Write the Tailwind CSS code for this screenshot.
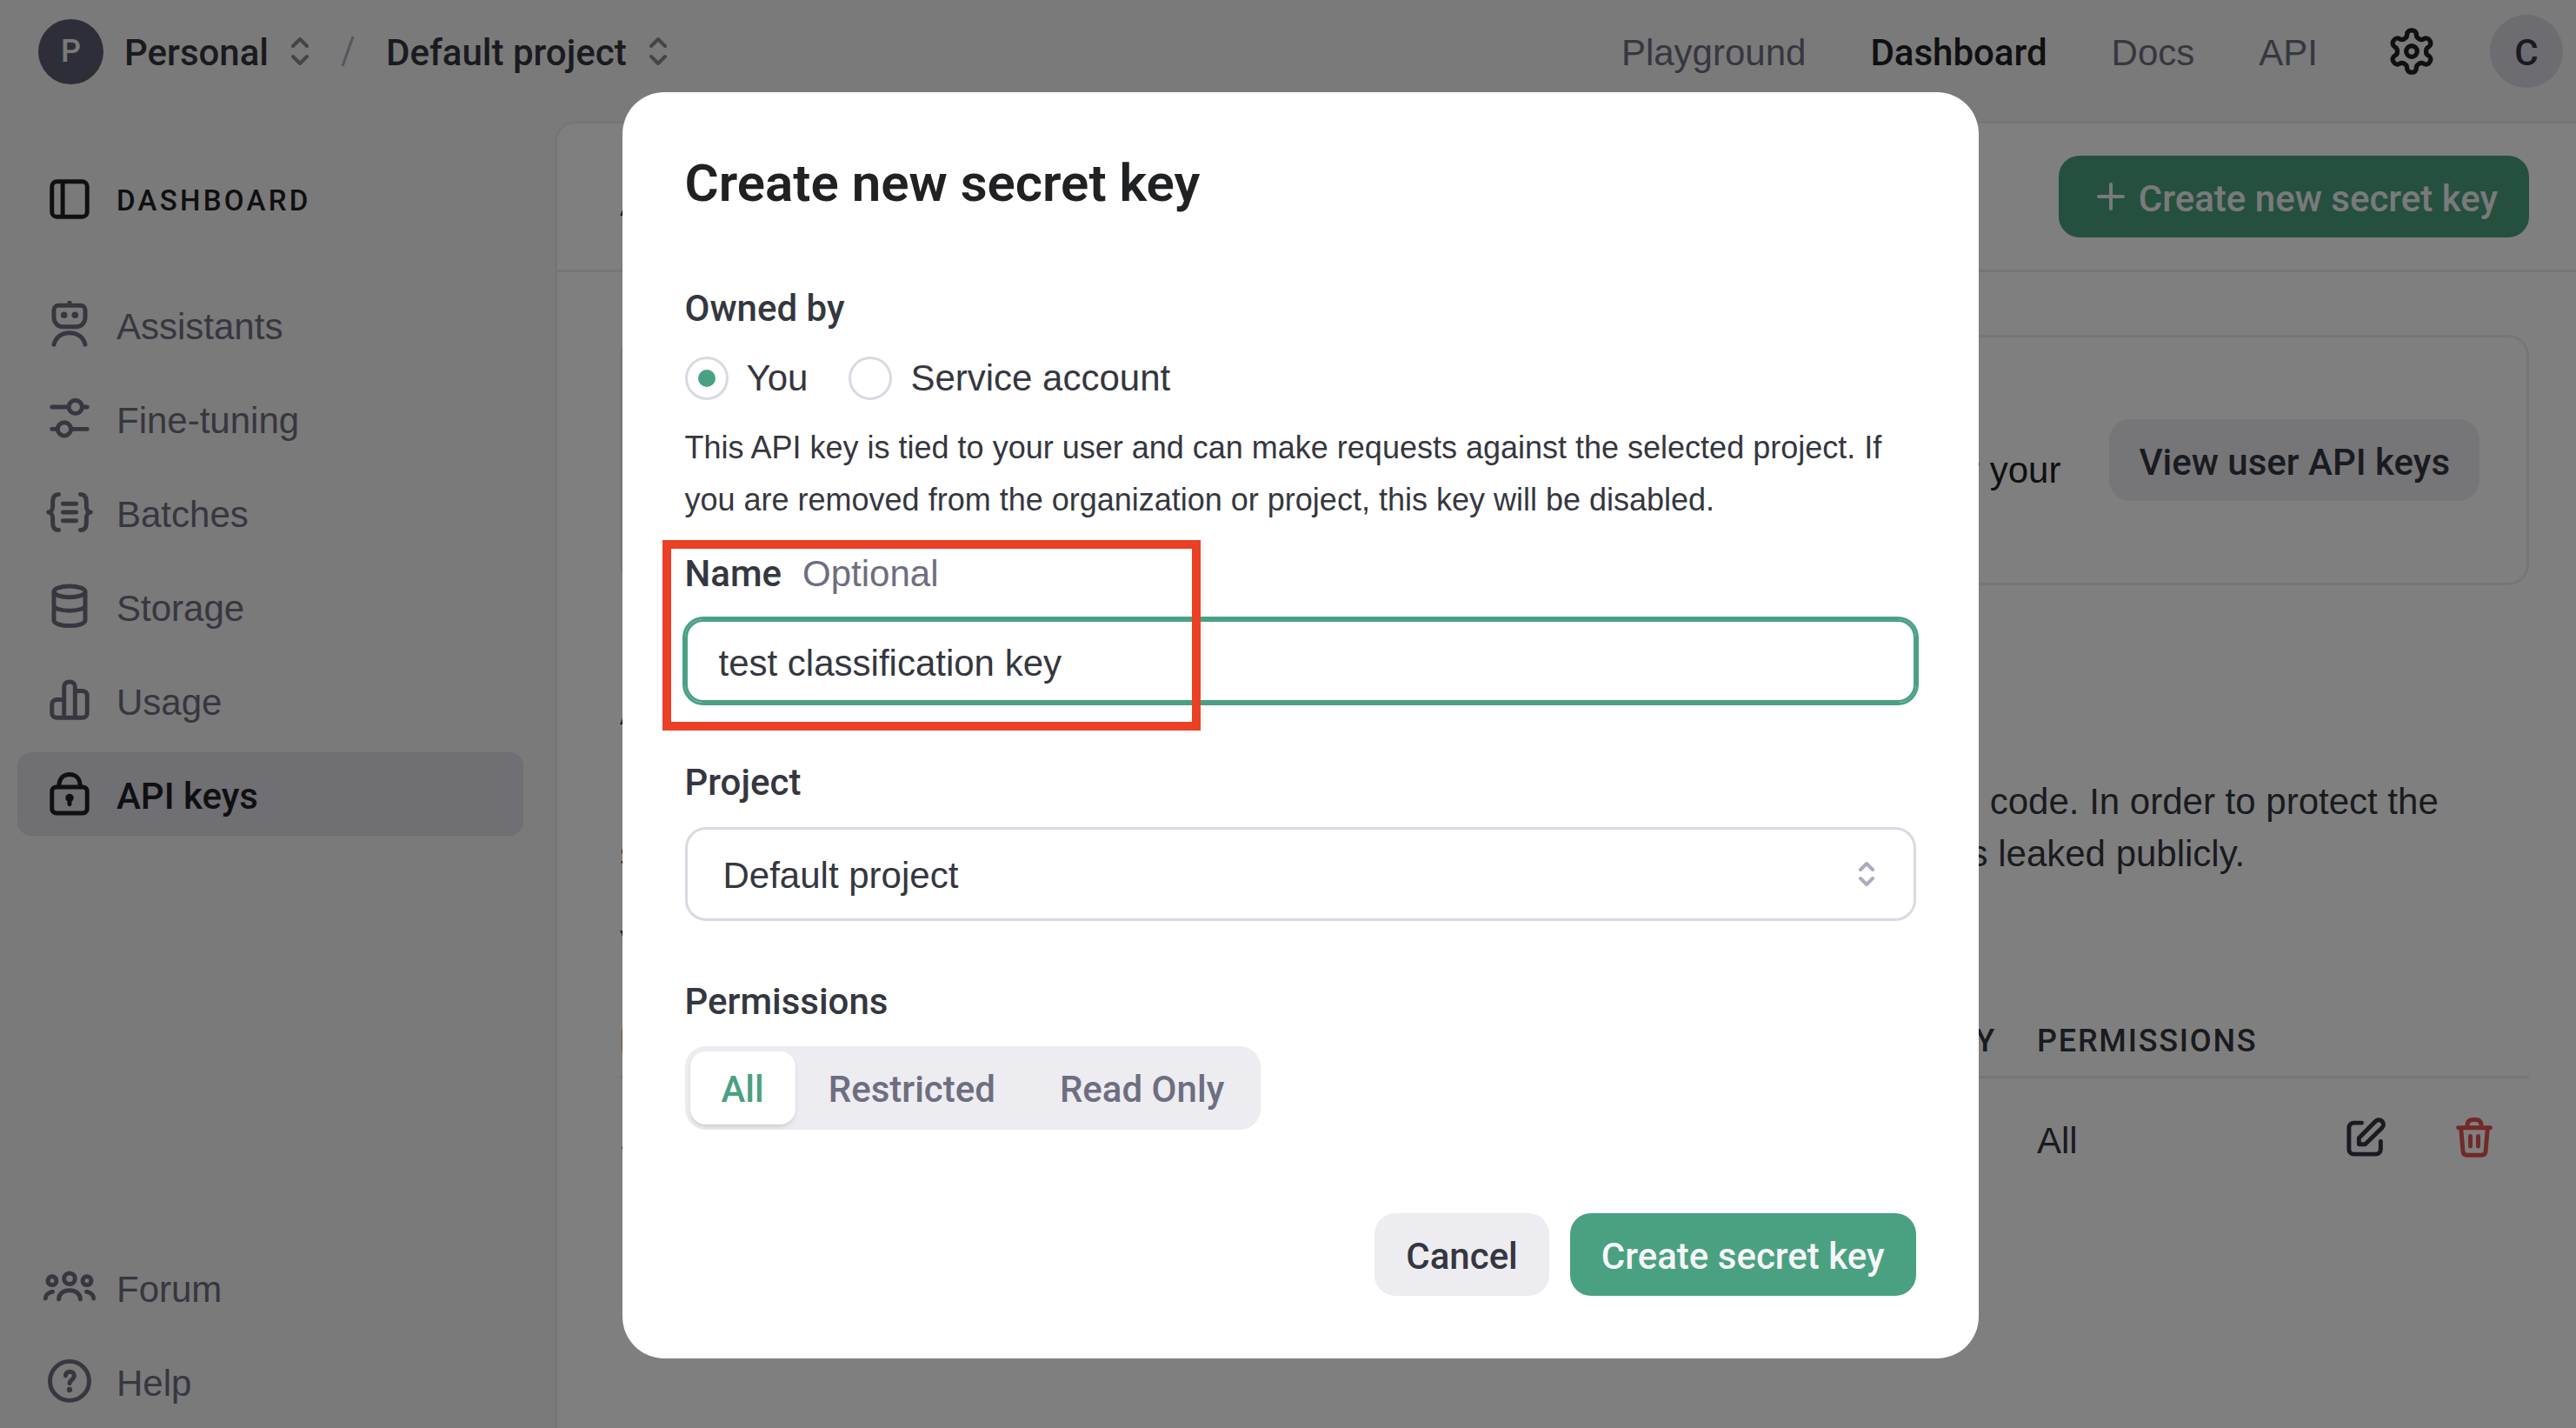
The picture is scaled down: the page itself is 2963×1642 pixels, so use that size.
<!DOCTYPE html>
<html lang="en">
<head>
<meta charset="utf-8">
<meta name="viewport" content="width=device-width, initial-scale=1">
<title>API keys</title>
<script src="https://cdn.jsdelivr.net/npm/@tailwindcss/browser@4"></script>
</head>
<body class="[font-family:'Liberation_Sans',Arial,sans-serif] text-[42px] leading-[60px] text-[#353740]">

<div class="flex h-screen flex-col overflow-hidden bg-[#f4f4f4]">
  <!-- Top bar -->
  <header class="flex h-[118px] shrink-0 items-center justify-between pr-[15px] pl-11">
    <div class="flex items-center [font-family:Roboto,'Liberation_Sans',sans-serif] font-medium">
      <span class="grid size-[75px] place-items-center rounded-full bg-[#5d5d70] text-[36px] text-[#f4f4f4]">P</span>
      <button type="button" class="ml-6 flex items-center gap-6 font-medium"><span class="pt-1">Personal</span>
        <svg class="h-8 w-6 text-[#8a8a8a]" viewBox="0 0 24 32" fill="none" stroke="currentColor" stroke-width="4" stroke-linecap="round" stroke-linejoin="round"><path d="M4 10l8-8 8 8M4 22l8 8 8-8"/></svg>
      </button>
      <svg class="ml-[33px] h-9 w-5 text-[#acacbe]" viewBox="0 0 20 36" fill="none" stroke="currentColor" stroke-width="3"><path d="M16 1L4 35"/></svg>
      <button type="button" class="ml-[34px] flex items-center gap-6 font-medium"><span class="pt-1">Default project</span>
        <svg class="h-8 w-6 text-[#8a8a8a]" viewBox="0 0 24 32" fill="none" stroke="currentColor" stroke-width="4" stroke-linecap="round" stroke-linejoin="round"><path d="M4 10l8-8 8 8M4 22l8 8 8-8"/></svg>
      </button>
    </div>
    <nav class="flex items-center text-[#6e6e80]">
      <div class="flex gap-[74px] pt-1">
        <a href="#playground">Playground</a>
        <a href="#dashboard" class="[font-family:Roboto,'Liberation_Sans',sans-serif] font-medium text-[#202123]">Dashboard</a>
        <a href="#docs">Docs</a>
        <a href="#api">API</a>
      </div>
      <button type="button" aria-label="Settings" class="ml-[79px] text-[#202123]">
        <svg class="size-[58px]" viewBox="0 0 24 24" fill="none" stroke="currentColor" stroke-width="2.200" stroke-linecap="round" stroke-linejoin="round"><path d="M12.220 2h-.440a2 2 0 0 0-2 2v.180a2 2 0 0 1-1 1.730l-.430.250a2 2 0 0 1-2 0l-.150-.080a2 2 0 0 0-2.730.730l-.220.380a2 2 0 0 0 .730 2.730l.150.100a2 2 0 0 1 1 1.720v.510a2 2 0 0 1-1 1.740l-.150.090a2 2 0 0 0-.730 2.730l.220.380a2 2 0 0 0 2.730.730l.150-.080a2 2 0 0 1 2 0l.430.250a2 2 0 0 1 1 1.730V20a2 2 0 0 0 2 2h.440a2 2 0 0 0 2-2v-.180a2 2 0 0 1 1-1.730l.430-.250a2 2 0 0 1 2 0l.150.080a2 2 0 0 0 2.730-.730l.220-.390a2 2 0 0 0-.730-2.730l-.150-.080a2 2 0 0 1-1-1.740v-.500a2 2 0 0 1 1-1.740l.150-.090a2 2 0 0 0 .730-2.730l-.220-.380a2 2 0 0 0-2.730-.730l-.150.080a2 2 0 0 1-2 0l-.430-.250a2 2 0 0 1-1-1.730V4a2 2 0 0 0-2-2z"/><circle cx="12" cy="12" r="2.600"/></svg>
      </button>
      <span class="ml-[61px] grid size-[84px] place-items-center rounded-full bg-[#d9d9e3] pt-1 [font-family:Roboto,'Liberation_Sans',sans-serif] font-medium text-[#353740]">C</span>
    </nav>
  </header>

  <div class="flex min-h-0 flex-1">
    <!-- Sidebar -->
    <aside class="flex w-[638px] shrink-0 flex-col pt-[84px] pr-9 pb-[5px] pl-5 text-[#6e6e80]">
      <div class="flex h-[54px] items-center gap-[27px] pl-[33px] text-[#202123]">
        <svg class="size-[54px]" viewBox="0 0 24 24" fill="none" stroke="currentColor" stroke-width="2.200"><rect x="3" y="3" width="18" height="18" rx="2.500"/><path d="M8.500 3v18"/></svg>
        <span class="pt-1 [font-family:Roboto,'Liberation_Sans',sans-serif] text-[33px] font-medium tracking-widest">DASHBOARD</span>
      </div>
      <nav class="mt-[69px] flex flex-col gap-3">
        <a href="#assistants" class="flex h-24 items-center gap-[27px] rounded-2xl pl-[33px]">
          <svg class="size-[54px]" viewBox="0 0 24 24" fill="none" stroke="currentColor" stroke-width="2.200" stroke-linecap="round" stroke-linejoin="round"><path d="M12 .8v1.400M6.300 2.300h11.400A2.300 2.300 0 0 1 20 4.600V8.600a4.600 4.600 0 0 1-4.600 4.600H8.600A4.600 4.600 0 0 1 4 8.600V4.600a2.300 2.300 0 0 1 2.300-2.300zM4 22.300c.9-3.700 4-6 8-6s7.100 2.300 8 6"/><circle cx="9.200" cy="7.200" r="1.700" fill="currentColor" stroke="none"/><circle cx="14.800" cy="7.200" r="1.700" fill="currentColor" stroke="none"/></svg>
          <span class="pt-1.5">Assistants</span></a>
        <a href="#fine-tuning" class="flex h-24 items-center gap-[27px] rounded-2xl pl-[33px]">
          <svg class="size-[54px]" viewBox="0 0 24 24" fill="none" stroke="currentColor" stroke-width="2.200" stroke-linecap="round"><path d="M3 6.200h8.500M18.500 6.200H21M3 17.500h2.800M12.800 17.500H21"/><circle cx="15" cy="6.200" r="3.400"/><circle cx="9.300" cy="17.500" r="3.400"/></svg>
          <span class="pt-1.5">Fine-tuning</span></a>
        <a href="#batches" class="flex h-24 items-center gap-[27px] rounded-2xl pl-[33px]">
          <svg class="size-[54px]" viewBox="0 0 24 24" fill="none" stroke="currentColor" stroke-width="2.200" stroke-linecap="round" stroke-linejoin="round"><path d="M6.500 2.900C4.200 2.900 3.400 4.300 3.400 6.500v2.300C3.400 10.600 2.600 12 1.200 12c1.400 0 2.200 1.400 2.200 3.200v2.300c0 2.200.8 3.600 3.100 3.600M17.500 2.900c2.300 0 3.100 1.400 3.100 3.600v2.300c0 1.800.8 3.200 2.200 3.200-1.400 0-2.200 1.400-2.200 3.200v2.300c0 2.200-.8 3.600-3.100 3.600M8.600 7.700h6.800M8.600 12h6.800M8.600 16.300h6.800"/></svg>
          <span class="pt-1.5">Batches</span></a>
        <a href="#storage" class="flex h-24 items-center gap-[27px] rounded-2xl pl-[33px]">
          <svg class="size-[54px]" viewBox="0 0 24 24" fill="none" stroke="currentColor" stroke-width="2.200"><ellipse cx="12" cy="4.600" rx="8" ry="2.800"/><path d="M4 4.600v14.600C4 20.900 7.600 22 12 22s8-1.100 8-2.800V4.600M4 11.600c0 1.600 3.600 2.700 8 2.700s8-1.100 8-2.700"/></svg>
          <span class="pt-1.5">Storage</span></a>
        <a href="#usage" class="flex h-24 items-center gap-[27px] rounded-2xl pl-[33px]">
          <svg class="size-[54px]" viewBox="0 0 24 24" fill="none" stroke="currentColor" stroke-width="2.200" stroke-linejoin="round"><path d="M9.200 21V5.200c0-1.500 1-2.500 2.800-2.500s2.800 1 2.800 2.500V21M9.200 11.800H5.500C4 11.800 3 12.800 3 14.200V18.500C3 20 4 21 5.500 21h13c1.500 0 2.500-1 2.500-2.500V9.700c0-1.500-1-2.400-2.500-2.400h-3.700"/></svg>
          <span class="pt-1.5">Usage</span></a>
        <a href="#api-keys" aria-current="page" class="flex h-24 items-center gap-[27px] rounded-2xl bg-[#dedee8] pl-[33px] [font-family:Roboto,'Liberation_Sans',sans-serif] font-medium text-[#202123]">
          <svg class="size-[54px]" viewBox="0 0 24 24" fill="none" stroke="currentColor" stroke-width="2.200" stroke-linecap="round"><rect x="3" y="8.400" width="18" height="13.400" rx="2.200"/><path d="M6.600 8c0-3.600 2-6 5.400-6s5.400 2.400 5.400 6"/><circle cx="12" cy="14" r="2.100" fill="currentColor" stroke="none"/><path d="M12 14.500v2.700"/></svg>
          <span class="pt-1.5">API keys</span></a>
      </nav>
      <nav class="mt-auto flex flex-col gap-3">
        <a href="#forum" class="flex h-24 items-center gap-[27px] rounded-2xl pl-[33px]">
          <svg class="size-[54px] overflow-visible" viewBox="0 0 24 24" fill="none" stroke="currentColor" stroke-width="2.200" stroke-linecap="round"><circle cx="12" cy="7.200" r="2.800"/><circle cx="3.100" cy="8.300" r="2.200"/><circle cx="20.900" cy="8.300" r="2.200"/><path d="M6.500 17.800C6.500 15 8.800 13.200 12 13.200s5.500 1.800 5.500 4.600M3.300 13.900C1.300 14.200-.2 15.600-.3 17.300M20.700 13.900c2 .3 3.500 1.700 3.600 3.400"/></svg>
          <span class="pt-1">Forum</span></a>
        <a href="#help" class="flex h-24 items-center gap-[27px] rounded-2xl pl-[33px]">
          <svg class="size-[54px]" viewBox="0 0 24 24" fill="none" stroke="currentColor" stroke-width="2.200" stroke-linecap="round" stroke-linejoin="round"><circle cx="12" cy="11.500" r="10"/><path d="M10 8.800c.1-1.300 1-2 2.200-2 1.300 0 2.200.8 2.200 2 0 2-2.400 2-2.400 4"/><circle cx="12" cy="16" r="1.400" fill="currentColor" stroke="none"/></svg>
          <span class="pt-1">Help</span></a>
      </nav>
    </aside>

    <!-- Main panel -->
    <main class="mt-[21px] min-w-0 flex-1 rounded-tl-3xl border-t-3 border-l-3 border-[#ececf1] bg-white">
      <div class="flex h-[171px] items-center justify-between border-b-3 border-[#ececf1] pr-[54px] pl-[72px]">
        <h1 class="pt-1 [font-family:Roboto,'Liberation_Sans',sans-serif] text-[60px] font-semibold text-[#202123]">API keys</h1>
        <button type="button" class="flex h-[94px] items-center gap-4 rounded-3xl bg-[#4aa181] pr-9 pl-11 [font-family:Roboto,'Liberation_Sans',sans-serif] font-medium text-[#f4f4f4]">
          <svg class="size-8" viewBox="0 0 32 32" fill="none" stroke="currentColor" stroke-width="4" stroke-linecap="round"><path d="M16 2v28M2 16h28"/></svg>
          <span class="pt-1.5">Create new secret key</span>
        </button>
      </div>

      <div class="pt-[72px] pr-[54px] pl-[72px]">
        <section class="flex h-72 items-center justify-end gap-14 rounded-3xl border-3 border-[#ececf1] pr-[54px] text-[#202123]">
          <div class="pt-6">
            <h2 class="[font-family:Roboto,'Liberation_Sans',sans-serif] font-medium">Project API keys have replaced user API keys</h2>
            <p>We recommend using project based API keys for more granular control over your<br>resources.</p>
          </div>
          <button type="button" class="h-[94px] rounded-3xl bg-[#ececf1] px-[34px] pt-1.5 [font-family:Roboto,'Liberation_Sans',sans-serif] font-medium text-[#353740]">View user API keys</button>
        </section>

        <div class="mt-[116px] flex flex-col gap-[43px]">
          <p>As an owner of this project, you can view and manage all API keys in this project.</p>
          <p>Do not share your API key with others or expose it in the browser or other client-side code. In order to protect the<br>security of your account, OpenAI can also automatically disable any API key that has leaked publicly.</p>
          <p>View usage per API key on the <a href="#usage">Usage page</a>.</p>
        </div>

        <table class="mt-[49px] w-full table-fixed text-left">
          <colgroup><col><col class="w-[480px]"><col class="w-[400px]"><col class="w-[340px]"><col class="w-[264px]"><col class="w-[302px]"></colgroup>
          <thead class="border-b-3 border-[#ececf1] [font-family:Roboto,'Liberation_Sans',sans-serif] text-[36px] tracking-wider">
            <tr class="h-[74px]">
              <th class="pb-1.5 font-medium">NAME</th><th class="pb-1.5 font-medium">SECRET KEY</th><th class="pb-1.5 font-medium">CREATED</th><th class="pr-[47px] pb-1.5 text-right font-medium">CREATED BY</th>
              <th class="pb-1.5 font-medium">PERMISSIONS</th><th></th>
            </tr>
          </thead>
          <tbody>
            <tr class="h-[138px]">
              <td class="pt-2">Secret key</td><td class="pt-2">sk-...w2Fq</td><td class="pt-2">May 6, 2024</td><td class="pt-2">Owner</td>
              <td class="pt-2">All</td>
              <td>
                <div class="flex justify-end gap-[71px] pr-9">
                  <button type="button" aria-label="Edit key"><svg class="size-[54px]" viewBox="0 0 24 24" fill="none" stroke="currentColor" stroke-width="2.200" stroke-linecap="round" stroke-linejoin="round"><path d="M10 4.500H6A2.500 2.500 0 0 0 3.500 7v11A2.500 2.500 0 0 0 6 20.500h11.200a2.500 2.500 0 0 0 2.500-2.500v-4M8.600 15.400v-3.200l8.500-8.500a2.300 2.300 0 0 1 3.300 3.300l-8.600 8.400z"/></svg></button>
                  <button type="button" aria-label="Delete key" class="text-[#e65252]"><svg class="size-[54px]" viewBox="0 0 24 24" fill="none" stroke="currentColor" stroke-width="2.200" stroke-linecap="round" stroke-linejoin="round"><path d="M3.800 7h16.400M8.300 6.800c0-2.600 1-3.900 2.700-3.900h2c1.700 0 2.700 1.300 2.700 3.900M5.200 7.200l1 11.800c.1 1.300.9 2 2.100 2h7.400c1.200 0 2-.7 2.100-2l1-11.800M10 11.300v5.200M14 11.300v5.200"/></svg></button>
                </div>
              </td>
            </tr>
          </tbody>
        </table>
      </div>
    </main>
  </div>
</div>

<!-- Dialog -->
<div class="fixed inset-0 flex items-start justify-center bg-black/50 pt-[106px] pl-7">
  <form role="dialog" aria-modal="true" aria-labelledby="dialog-title" class="flex w-[1560px] flex-col rounded-[48px] bg-white p-[72px]">
    <h2 id="dialog-title" class="[font-family:Roboto,'Liberation_Sans',sans-serif] text-[60px] leading-[66px] font-semibold text-[#202123]">Create new secret key</h2>

    <fieldset class="mt-[81px]">
      <legend class="[font-family:Roboto,'Liberation_Sans',sans-serif] font-medium">Owned by</legend>
      <div class="mt-5 flex gap-[47px]">
        <label class="flex items-center gap-[21px]">
          <input type="radio" name="owner" value="you" checked class="grid size-[50px] appearance-none place-content-center rounded-full border-3 border-[#d9d9e3] before:size-5 before:rounded-full before:content-[''] checked:before:bg-[#4aa181]">You</label>
        <label class="flex items-center gap-[21px]">
          <input type="radio" name="owner" value="service" class="grid size-[50px] appearance-none place-content-center rounded-full border-3 border-[#d9d9e3] before:size-5 before:rounded-full before:content-[''] checked:before:bg-[#4aa181]">Service account</label>
      </div>
      <p class="mt-5 text-[36px]">This API key is tied to your user and can make requests against the selected project. If<br>you are removed from the organization or project, this key will be disabled.</p>
    </fieldset>

    <div class="relative mt-[25px] flex flex-col gap-[22px]">
      <label for="key-name" class="flex gap-6"><span class="[font-family:Roboto,'Liberation_Sans',sans-serif] font-medium">Name</span><span class="text-[#6e6e80]">Optional</span></label>
      <input id="key-name" type="text" value="test classification key" class="h-[96px] rounded-[21px] border-3 border-[#4aa181] px-9 pt-1.5 ring-3 ring-[#4aa181] outline-none">
      <!-- Highlight box -->
      <div class="pointer-events-none absolute -top-[9px] -left-[26px] h-[219px] w-[619px] border-10 border-[#eb4025]"></div>
    </div>

    <div class="mt-[62px] flex flex-col gap-[21px]">
      <label for="project" class="[font-family:Roboto,'Liberation_Sans',sans-serif] font-medium">Project</label>
      <div class="relative">
        <select id="project" class="block h-[108px] w-full appearance-none rounded-3xl border-3 border-[#d9d9e3] bg-white pt-1 pl-[41px]"><option>Default project</option></select>
        <svg class="pointer-events-none absolute top-10 right-[46px] h-7 w-[22px] text-[#acacbe]" viewBox="0 0 22 28" fill="none" stroke="currentColor" stroke-width="4" stroke-linecap="round" stroke-linejoin="round"><path d="M4 9l7-7 7 7M4 19l7 7 7-7"/></svg>
      </div>
    </div>

    <div class="mt-[63px] flex flex-col items-start gap-[21px]">
      <span id="perm-label" class="[font-family:Roboto,'Liberation_Sans',sans-serif] font-medium">Permissions</span>
      <div role="group" aria-labelledby="perm-label" class="flex h-24 gap-0.5 rounded-3xl bg-[#ececf1] p-1.5 [font-family:Roboto,'Liberation_Sans',sans-serif] text-[#6e6e80]">
        <button type="button" aria-pressed="true" class="rounded-[18px] bg-white px-9 pt-1 font-medium text-[#4aa181] shadow-md">All</button>
        <button type="button" aria-pressed="false" class="px-9 pt-1 font-medium">Restricted</button>
        <button type="button" aria-pressed="false" class="px-9 pt-1 font-medium">Read Only</button>
      </div>
    </div>

    <div class="mt-24 flex justify-end gap-6 [font-family:Roboto,'Liberation_Sans',sans-serif]">
      <button type="button" class="h-[95px] rounded-3xl bg-[#ececf1] px-9 pt-1 font-medium">Cancel</button>
      <button type="submit" class="h-[95px] rounded-3xl bg-[#4aa181] px-9 pt-1 font-medium text-[#f7f7f8]">Create secret key</button>
    </div>
  </form>
</div>
</body>
</html>
